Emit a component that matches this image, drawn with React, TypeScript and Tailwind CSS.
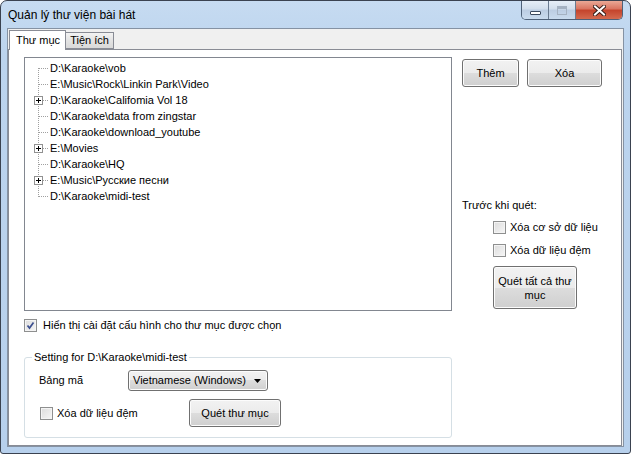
import React from 'react';

const folders = [
  { path: 'D:\\Karaoke\\vob', plus: false },
  { path: 'E:\\Music\\Rock\\Linkin Park\\Video', plus: false },
  { path: 'D:\\Karaoke\\Califomia Vol 18', plus: true },
  { path: 'D:\\Karaoke\\data from zingstar', plus: false },
  { path: 'D:\\Karaoke\\download_youtube', plus: false },
  { path: 'E:\\Movies', plus: true },
  { path: 'D:\\Karaoke\\HQ', plus: false },
  { path: 'E:\\Music\\Русские песни', plus: true },
  { path: 'D:\\Karaoke\\midi-test', plus: false },
];

const btn =
  'flex items-center justify-center rounded-[3px] border border-[#707070] bg-[linear-gradient(180deg,#f2f2f2_0%,#ebebeb_50%,#dddddd_50%,#cfcfcf_100%)] shadow-[inset_0_0_0_1px_#fcfcfc] text-black';

function CheckBox({ checked = false }: { checked?: boolean }) {
  return (
    <div className="relative h-[13px] w-[13px] shrink-0 border border-[#8e8f8f] bg-[linear-gradient(135deg,#dcdcdc,#f6f6f6)] shadow-[inset_0_0_0_1px_#f4f4f4]">
      {checked && (
        <svg width="11" height="11" className="absolute left-0 top-0">
          <path d="M2.5 5.5 L4.5 8 L8.5 2.5" fill="none" stroke="#3c4f8f" strokeWidth="1.7" />
        </svg>
      )}
    </div>
  );
}

function TreeRow({ label, plus, first, last }: { label: string; plus: boolean; first: boolean; last: boolean }) {
  return (
    <div className="flex h-[16px] items-center">
      <svg width="25" height="16" className="shrink-0">
        <line x1="13.5" y1={first ? 8 : 0} x2="13.5" y2={last ? 9 : 16} stroke="#a0a0a0" strokeDasharray="1 1" />
        <line x1="14" y1="8.5" x2="24" y2="8.5" stroke="#a0a0a0" strokeDasharray="1 1" />
        {plus && (
          <>
            <rect x="9.5" y="4.5" width="8" height="8" fill="white" stroke="#919191" />
            <line x1="11" y1="8.5" x2="16" y2="8.5" stroke="#000" />
            <line x1="13.5" y1="6" x2="13.5" y2="11" stroke="#000" />
          </>
        )}
      </svg>
      <span className="whitespace-nowrap">{label}</span>
    </div>
  );
}

function CaptionButtons() {
  return (
    <div className="flex h-[19px] self-start overflow-hidden rounded-b-[5px] border border-t-0 border-[#4f6178]">
      <div className="flex w-[27px] items-center justify-center border-r border-[#6a7b90] bg-[linear-gradient(180deg,#e6eef7_0%,#d2deec_45%,#bccde2_50%,#c9dbee_100%)]">
        <div className="mt-[5px] h-[4px] w-[11px] rounded-[1px] border border-[#3b4a5e] bg-white" />
      </div>
      <div className="flex w-[27px] items-center justify-center border-r border-[#6a7b90] bg-[linear-gradient(180deg,#e6eef7_0%,#d2deec_45%,#bccde2_50%,#c9dbee_100%)]">
        <div className="h-[9px] w-[10px] border border-[#a5b2c2] shadow-[inset_0_2px_0_#a5b2c2]" />
      </div>
      <div className="flex w-[46px] items-center justify-center bg-[linear-gradient(180deg,#eaa896_0%,#d9735f_45%,#c4432b_50%,#d46a4f_100%)]">
        <svg width="13" height="11" viewBox="0 0 13 11">
          <path d="M2 1.5 L11 9.5 M11 1.5 L2 9.5" stroke="#3a1f1a" strokeWidth="4" strokeLinecap="square" />
          <path d="M2 1.5 L11 9.5 M11 1.5 L2 9.5" stroke="#ffffff" strokeWidth="2" strokeLinecap="square" />
        </svg>
      </div>
    </div>
  );
}

export default function App() {
  return (
    <div className="flex h-[454px] w-[631px] flex-col rounded-t-[7px] rounded-b-[3px] border border-[#3a4250] bg-[linear-gradient(180deg,#c6dbf1_0%,#bcd4ee_12%,#b7d0ec_100%)] px-[6px] pb-[6px] font-['Liberation_Sans',Arial,sans-serif] text-[11px] leading-[13px] text-black">
      {/* Title bar */}
      <div className="flex h-[27px] shrink-0 items-start">
        <div className="pl-[1px] pt-[7px] text-[12px] leading-[15px]">Quản lý thư viện bài hát</div>
        <div className="flex-1" />
        <CaptionButtons />
        <div className="w-[1px]" />
      </div>

      {/* Client area */}
      <div className="flex flex-1 flex-col border border-[#8592a3] bg-[#f0f0f0]">
        {/* Tabs */}
        <div className="relative z-10 flex h-[21px] shrink-0 items-end pl-[1px]">
          <div className="flex h-[20px] w-[57px] items-center border-x border-t border-[#898c95] bg-white pl-[6px] pb-[1px]">
            Thư mục
          </div>
          <div className="mb-[1px] flex h-[17px] w-[48px] items-center justify-center border-y border-r border-[#898c95] bg-[linear-gradient(180deg,#f3f3f3,#e3e3e3_50%,#d9d9d9)]">
            Tiện ích
          </div>
        </div>

        {/* Tab page */}
        <div className="-mt-px mr-[1px] flex flex-1 border border-[#898c95] bg-white pl-[15px] pt-[7px]">
          {/* Left column */}
          <div className="flex w-[428px] flex-col">
            <div className="h-[254px] border border-[#828790] bg-white pt-[2px]">
              {folders.map((f, i) => (
                <TreeRow key={f.path} label={f.path} plus={f.plus} first={i === 0} last={i === folders.length - 1} />
              ))}
            </div>

            <div className="mt-[8px] flex items-center gap-[6px]">
              <CheckBox checked />
              <span>Hiển thị cài đặt cấu hình cho thư mục được chọn</span>
            </div>

            <fieldset className="mt-[19px] h-[87px] rounded-[3px] border border-[#d5dfe5] pl-[14px]">
              <legend className="ml-[-7px] px-[2px]">Setting for D:\Karaoke\midi-test</legend>
              <div className="mt-[6px] flex items-center">
                <span className="w-[89px]">Bảng mã</span>
                <div className={`${btn} h-[21px] w-[140px] !justify-between pl-[4px] pr-[6px]`}>
                  <span>Vietnamese (Windows)</span>
                  <svg width="7" height="4" viewBox="0 0 7 4">
                    <path d="M0 0 H7 L3.5 4 Z" fill="#000" />
                  </svg>
                </div>
              </div>
              <div className="mt-[8px] flex items-center pl-[1px]">
                <div className="flex w-[149px] items-center gap-[4px]">
                  <CheckBox />
                  <span>Xóa dữ liệu đệm</span>
                </div>
                <button className={`${btn} h-[28px] w-[92px]`}>Quét thư mục</button>
              </div>
            </fieldset>
          </div>

          {/* Right column */}
          <div className="ml-[10px] flex flex-col">
            <div className="mt-[2px] flex gap-[8px]">
              <button className={`${btn} h-[28px] w-[57px]`}>Thêm</button>
              <button className={`${btn} h-[28px] w-[75px]`}>Xóa</button>
            </div>

            <div className="mt-[112px]">Trước khi quét:</div>

            <div className="ml-[31px] mt-[9px] flex items-center gap-[4px]">
              <CheckBox />
              <span>Xóa cơ sở dữ liệu</span>
            </div>
            <div className="ml-[31px] mt-[10px] flex items-center gap-[4px]">
              <CheckBox />
              <span>Xóa dữ liệu đệm</span>
            </div>

            <button className={`${btn} ml-[31px] mt-[9px] h-[43px] w-[84px] px-[4px] text-center leading-[14px]`}>
              Quét tất cả thư mục
            </button>
          </div>
        </div>
      </div>
    </div>
  );
}
